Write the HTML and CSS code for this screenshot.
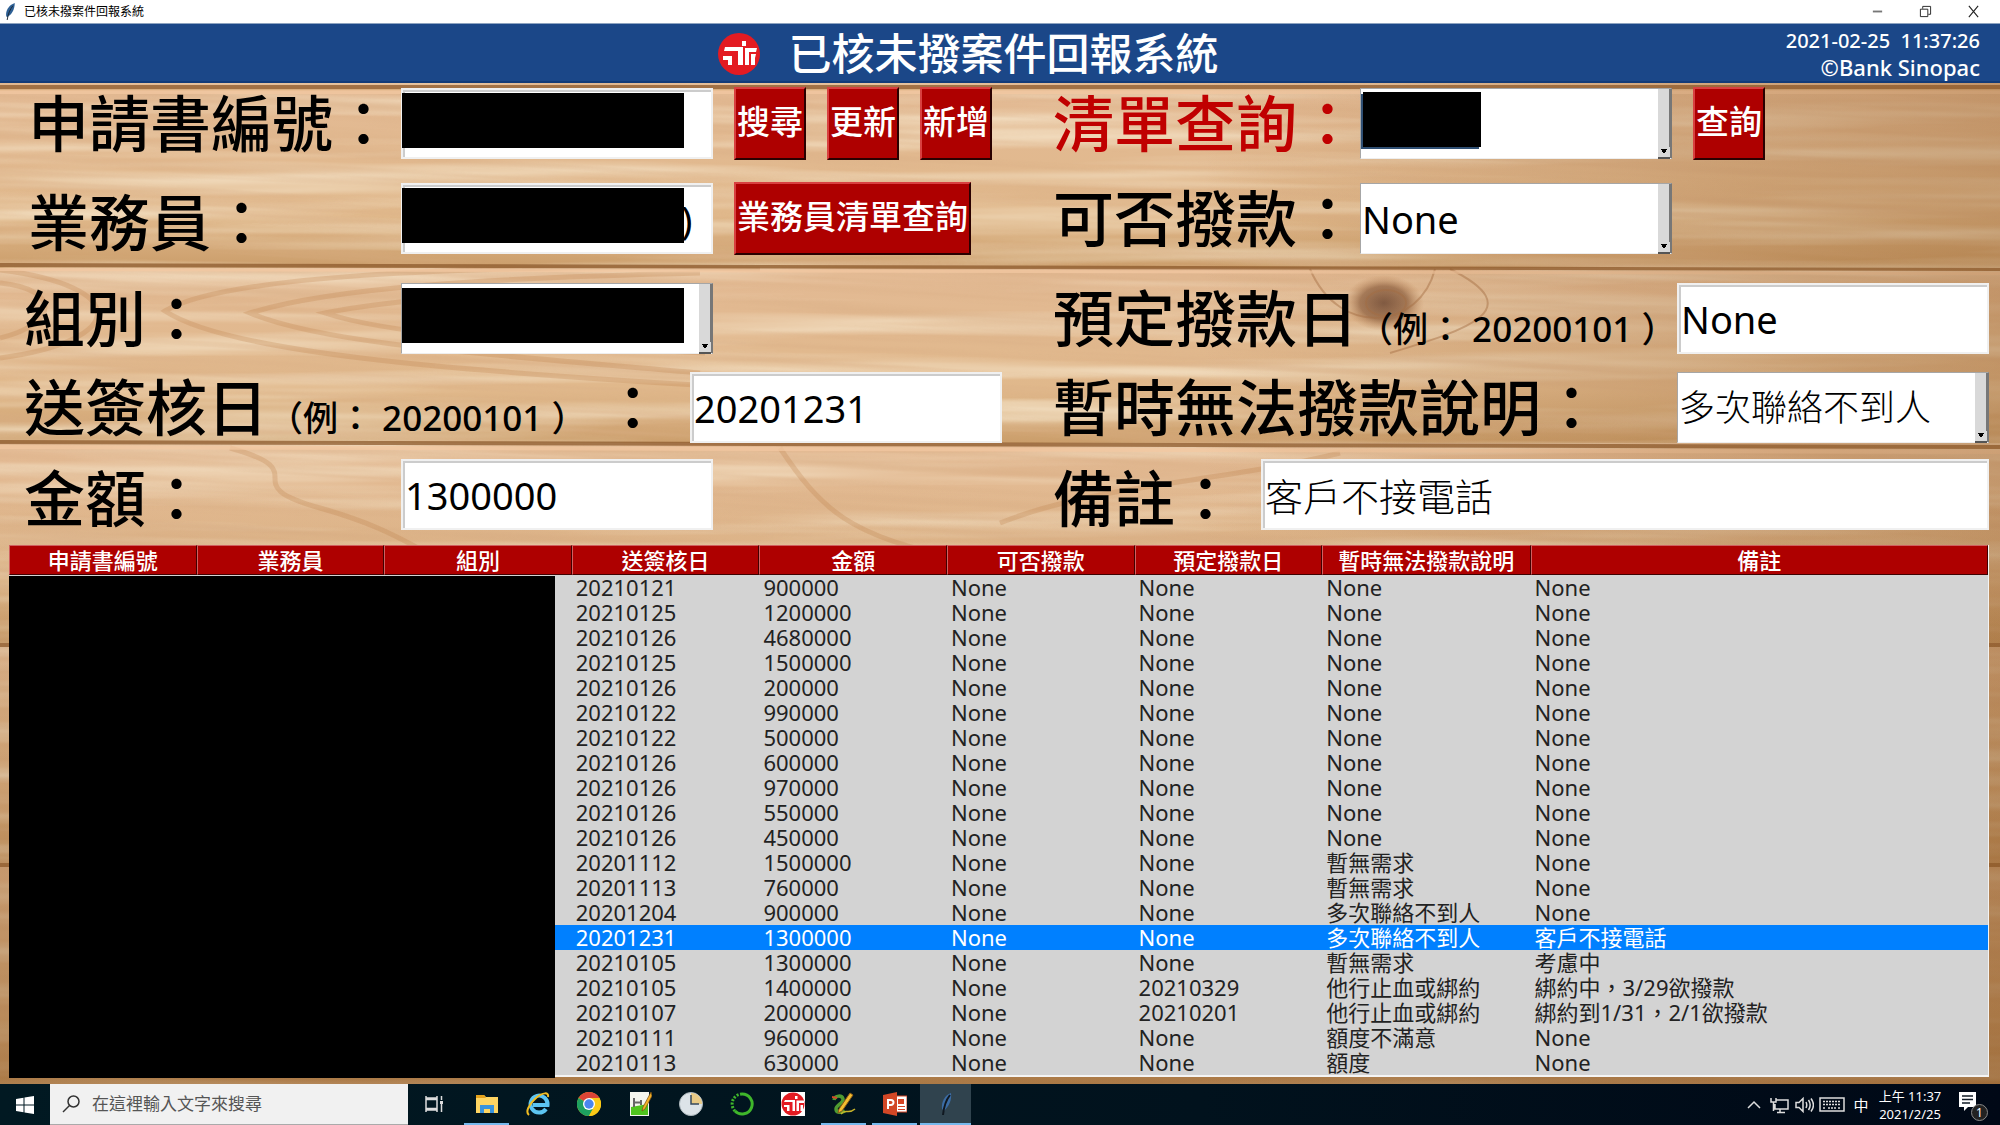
FILE: index.html
```html
<!DOCTYPE html>
<html lang="zh-Hant">
<head>
<meta charset="utf-8">
<title>已核未撥案件回報系統</title>
<link rel="stylesheet" href="styles.css">
</head>
<body>
<div class="titlebar">
  <svg class="feather" viewBox="0 0 12 18" aria-hidden="true"><path d="M11 0C5 2 1 8 2 14l1 1C8 12 11 7 11 0z" fill="#2d5f94"/><path d="M9 3C6 7 4 11 3 18" stroke="#1c2733" fill="none"/></svg>
  <span class="titlebar-text">已核未撥案件回報系統</span>
  <div class="window-buttons">
    <button aria-label="最小化"><svg viewBox="0 0 14 14"><path d="M2 7h10" stroke="#777" stroke-width="2"/></svg></button>
    <button aria-label="還原"><svg viewBox="0 0 14 14" fill="none" stroke="#222"><path d="M1.500 4.500h8v8h-8zM4 4V1.500h8.500V10H10"/></svg></button>
    <button aria-label="關閉"><svg viewBox="0 0 14 14" stroke="#222" stroke-width="1.200"><path d="M2 1l10 12M12 1L2 13"/></svg></button>
  </div>
</div>

<header class="banner">
  <div class="brand">
    <svg class="brand-logo" viewBox="0 0 42 42" aria-hidden="true"><circle cx="21" cy="21" r="21" fill="#e31b22"/><path fill="#fff" d="M7 14h18v18h-5V18H6zM5 23h9v9h-4v-5H5zM24 8h4v5h-4zM27 15h12l-1 4h-7v13h-4zM33 21h5l-1 4v7h-4z"/></svg>
    <h1>已核未撥案件回報系統</h1>
  </div>
  <div class="stamp"><time>2021-02-25&nbsp; 11:37:26</time><span class="owner">©Bank Sinopac</span></div>
</header>

<main class="desk">
  <svg class="wood" viewBox="0 0 2000 1001" preserveAspectRatio="none" aria-hidden="true">
    <defs>
      <filter id="grain" x="0" y="0" width="100%" height="100%"><feTurbulence type="fractalNoise" baseFrequency="0.0022 0.085" numOctaves="3" seed="8"/><feColorMatrix values="0 0 0 0 .70  0 0 0 0 .43  0 0 0 0 .24  2.200 0 0 0 -0.900"/></filter>
      <filter id="light" x="0" y="0" width="100%" height="100%"><feTurbulence type="fractalNoise" baseFrequency="0.0016 0.050" numOctaves="3" seed="31"/><feColorMatrix values="0 0 0 0 .92  0 0 0 0 .79  0 0 0 0 .60  0 1.800 0 0 -0.750"/></filter>
      <linearGradient id="plank" x2="0" y2="1"><stop offset="0" stop-color="#e3ba94"/><stop offset=".7" stop-color="#e0b88b"/><stop offset="1" stop-color="#cb9e6b"/></linearGradient>
      <linearGradient id="edge"><stop offset=".6" stop-color="#8a5420" stop-opacity="0"/><stop offset="1" stop-color="#8a5420" stop-opacity=".35"/></linearGradient>
      <linearGradient id="deep" x2="0" y2="1"><stop offset=".4" stop-color="#8a5420" stop-opacity="0"/><stop offset="1" stop-color="#8a5420" stop-opacity=".5"/></linearGradient>
      <radialGradient id="knot"><stop offset="0" stop-color="#7f5a44"/><stop offset=".6" stop-color="#9c7050" stop-opacity=".85"/><stop offset="1" stop-color="#c79468" stop-opacity="0"/></radialGradient>
    </defs>
    <path fill="url(#plank)" d="M0 0h2000v8H0z"/><path fill="url(#plank)" d="M0 8h2000v177H0z"/><path fill="url(#plank)" d="M0 185h2000v175H0z"/><path fill="url(#plank)" d="M0 360h2000v200H0z"/><path fill="url(#plank)" d="M0 560h2000v220H0z"/><path fill="url(#plank)" d="M0 780h2000v221H0z"/>
    <path filter="url(#light)" d="M0 0h2000v1001H0z"/>
    <g transform="rotate(3)"><path filter="url(#grain)" opacity=".6" d="M-60-120h2180v1200H-60z"/></g>
    <g fill="none" stroke="#bd804b" stroke-width="5" opacity=".28"><path d="M700 190C480 195 330 205 250 230c70 30 220 40 450 60M650 205C500 210 400 215 325 230c60 20 180 30 380 40M760 186C440 180 220 195 165 228c60 40 260 60 640 80M0 200c60 6 60 40 0 55M0 187c130 16 130 70 0 88M230 365c90 25 0 35 90 60s100 50 150 60M780 365c40 60 70 90 180 110M1000 440c100-40 220-40 340-70"/></g>
    <ellipse cx="1384" cy="220" rx="40" ry="28" fill="url(#knot)"/>
    <g fill="none" stroke="#a66f45" stroke-width="2" opacity=".45"><ellipse cx="1386" cy="220" rx="20" ry="13"/><path d="M1310 186c30 70 110 60 125 0M1450 186c80 40 20 60-60 84"/></g>
    <g fill="#8c5a2c" opacity=".75"><path d="M0 2h2000v4H0zM0 180l2000 5v3L0 184zM0 357l2000 5v4L0 361zM0 560h2000v4H0zM0 780h2000v4H0z"/></g>
    <g fill="#f3c9a2" opacity=".7"><path d="M0 7h2000v4H0zM0 185l2000 4v3L0 188zM0 362l2000 5v4L0 366z"/></g>
    <path fill="url(#edge)" d="M0 0h2000v1001H0z"/><path fill="url(#deep)" d="M0 0h2000v1001H0z"/>
  </svg>

  <form class="form" onsubmit="return false">
    <div class="cell cell-inset">
      <label for="app-no">申請書編號：</label>
      <div class="controls"><div class="field"><input id="app-no" type="text"><span class="mask"></span></div>
      <button class="action">搜尋</button><button class="action">更新</button><button class="action">新增</button></div>
    </div>
    <div class="cell cell-right">
      <label class="accent" for="list-query">清單查詢：</label>
      <div class="controls"><div class="field combo"><select id="list-query"><option></option></select><span class="mask mask-short"></span></div>
      <button class="action">查詢</button></div>
    </div>

    <div class="cell cell-inset low">
      <label for="agent">業務員：</label>
      <div class="controls"><div class="field"><input id="agent" class="tail" type="text" value=")"><span class="mask"></span></div>
      <button class="action">業務員清單查詢</button></div>
    </div>
    <div class="cell cell-right">
      <label for="can-pay">可否撥款：</label>
      <div class="field combo"><select id="can-pay"><option>None</option></select></div>
    </div>

    <div class="cell">
      <label for="team">組別：</label>
      <div class="field combo"><select id="team"><option></option></select><span class="mask"></span></div>
    </div>
    <div class="cell cell-end">
      <label for="pay-date">預定撥款日<small>（例： 20200101 ）</small></label>
      <div class="field"><input id="pay-date" type="text" value="None"></div>
    </div>

    <div class="cell cell-wide">
      <label for="sign-date">送簽核日<small>（例： 20200101 ）</small> ：</label>
      <div class="field"><input id="sign-date" type="text" value="20201231"></div>
    </div>
    <div class="cell cell-end">
      <label for="reason">暫時無法撥款說明：</label>
      <div class="field combo"><select id="reason" class="han"><option>多次聯絡不到人</option></select></div>
    </div>

    <div class="cell low">
      <label for="amount">金額：</label>
      <div class="field"><input id="amount" type="text" value="1300000"></div>
    </div>
    <div class="cell cell-note low">
      <label for="note">備註：</label>
      <div class="field field-fill"><input id="note" class="han-light" type="text" value="客戶不接電話"></div>
    </div>
  </form>

  <div class="list">
    <table>
      <colgroup><col class="c"><col class="c"><col class="c"><col class="c"><col class="c"><col class="c"><col class="c"><col class="c-reason"><col></colgroup>
      <thead><tr><th>申請書編號</th><th>業務員</th><th>組別</th><th>送簽核日</th><th>金額</th><th>可否撥款</th><th>預定撥款日</th><th>暫時無法撥款說明</th><th>備註</th></tr></thead>
      <tbody>
        <tr><td></td><td></td><td></td><td>20210121</td><td>900000</td><td>None</td><td>None</td><td>None</td><td>None</td></tr>
        <tr><td></td><td></td><td></td><td>20210125</td><td>1200000</td><td>None</td><td>None</td><td>None</td><td>None</td></tr>
        <tr><td></td><td></td><td></td><td>20210126</td><td>4680000</td><td>None</td><td>None</td><td>None</td><td>None</td></tr>
        <tr><td></td><td></td><td></td><td>20210125</td><td>1500000</td><td>None</td><td>None</td><td>None</td><td>None</td></tr>
        <tr><td></td><td></td><td></td><td>20210126</td><td>200000</td><td>None</td><td>None</td><td>None</td><td>None</td></tr>
        <tr><td></td><td></td><td></td><td>20210122</td><td>990000</td><td>None</td><td>None</td><td>None</td><td>None</td></tr>
        <tr><td></td><td></td><td></td><td>20210122</td><td>500000</td><td>None</td><td>None</td><td>None</td><td>None</td></tr>
        <tr><td></td><td></td><td></td><td>20210126</td><td>600000</td><td>None</td><td>None</td><td>None</td><td>None</td></tr>
        <tr><td></td><td></td><td></td><td>20210126</td><td>970000</td><td>None</td><td>None</td><td>None</td><td>None</td></tr>
        <tr><td></td><td></td><td></td><td>20210126</td><td>550000</td><td>None</td><td>None</td><td>None</td><td>None</td></tr>
        <tr><td></td><td></td><td></td><td>20210126</td><td>450000</td><td>None</td><td>None</td><td>None</td><td>None</td></tr>
        <tr><td></td><td></td><td></td><td>20201112</td><td>1500000</td><td>None</td><td>None</td><td>暫無需求</td><td>None</td></tr>
        <tr><td></td><td></td><td></td><td>20201113</td><td>760000</td><td>None</td><td>None</td><td>暫無需求</td><td>None</td></tr>
        <tr><td></td><td></td><td></td><td>20201204</td><td>900000</td><td>None</td><td>None</td><td>多次聯絡不到人</td><td>None</td></tr>
        <tr class="selected"><td></td><td></td><td></td><td>20201231</td><td>1300000</td><td>None</td><td>None</td><td>多次聯絡不到人</td><td>客戶不接電話</td></tr>
        <tr><td></td><td></td><td></td><td>20210105</td><td>1300000</td><td>None</td><td>None</td><td>暫無需求</td><td>考慮中</td></tr>
        <tr><td></td><td></td><td></td><td>20210105</td><td>1400000</td><td>None</td><td>20210329</td><td>他行止血或綁約</td><td>綁約中，3/29欲撥款</td></tr>
        <tr><td></td><td></td><td></td><td>20210107</td><td>2000000</td><td>None</td><td>20210201</td><td>他行止血或綁約</td><td>綁約到1/31，2/1欲撥款</td></tr>
        <tr><td></td><td></td><td></td><td>20210111</td><td>960000</td><td>None</td><td>None</td><td>額度不滿意</td><td>None</td></tr>
        <tr><td></td><td></td><td></td><td>20210113</td><td>630000</td><td>None</td><td>None</td><td>額度</td><td>None</td></tr>
      </tbody>
    </table>
    <div class="list-mask"></div>
  </div>
</main>

<footer class="taskbar">
  <button class="start" aria-label="開始"><svg viewBox="0 0 18 18" fill="#fff"><path d="M0 3l7.500-1.200V8.500H0zM8.500 1.600L18 0v8.500H8.500zM0 9.500h7.500v6.700L0 15zM8.500 9.500H18V18l-9.500-1.600z"/></svg></button>
  <label class="search"><svg viewBox="0 0 18 18" fill="none" stroke="#333" stroke-width="1.500"><circle cx="11.500" cy="6.500" r="5.500"/><path d="M7.500 10.500L1 17"/></svg><input type="text" placeholder="在這裡輸入文字來搜尋" aria-label="在這裡輸入文字來搜尋"></label>
  <button class="task task-view" aria-label="工作檢視"><svg viewBox="0 0 24 24" fill="none" stroke="#ddd" stroke-width="1.500"><path d="M4 7.500h11v9H4zM4 4v2h11V4M4 20v-2h11v2M19.500 4v4M19.500 12v8"/><path d="M18 9h3v3h-3z" fill="#ddd" stroke="none"/></svg></button>
  <button class="task running" aria-label="檔案總管"><svg viewBox="0 0 24 24"><path d="M1 3h8l2 2h12v16H1z" fill="#ffd562"/><path d="M1 3h8l2 3H1z" fill="#e5a21c"/><path d="M5 13h14v8h-4v-4H9v4H5z" fill="#3a93dc"/></svg></button>
  <button class="task" aria-label="Internet Explorer"><svg viewBox="0 0 24 24" fill="none"><path d="M20 17a8.500 8.500 0 1 1 1.500-4H7" stroke="#5cc5f2" stroke-width="4"/><path d="M3 23C-1 20 3 12 10 6s13-6 12-1" stroke="#f2bd22" stroke-width="2"/></svg></button>
  <button class="task" aria-label="Chrome"><svg viewBox="0 0 24 24"><circle cx="12" cy="12" r="12" fill="#fbc916"/><path d="M12 12L1.600 6A12 12 0 0 1 22.400 6z" fill="#dc4437"/><path d="M12 12L1.600 6A12 12 0 0 0 12 24l5-9z" fill="#1da05f"/><path d="M12 6h10.400L17 12z" fill="#dc4437"/><path d="M17 15l-5 9a12 12 0 0 0 10.400-18H12z" fill="#fbc916"/><circle cx="12" cy="12" r="6" fill="#fff"/><circle cx="12" cy="12" r="4.700" fill="#4a86ee"/></svg></button>
  <button class="task" aria-label="記事本"><svg viewBox="0 0 24 24"><path d="M2 0h19v24H2z" fill="#f3f5ee"/><path d="M3 15l17-3v11H3z" fill="#4fc41e"/><path d="M6 6v9M6 10.500h7M13 8v5" fill="none" stroke="#666" stroke-width="2"/><path d="M23 0L15 15l-1 4 3-2L24 4z" fill="#f3b028" stroke="#754d12" stroke-width=".7"/></svg></button>
  <button class="task" aria-label="時鐘"><svg viewBox="0 0 24 24"><circle cx="12" cy="12" r="11.500" fill="#dce3e8" stroke="#aeb8bd"/><path d="M12 12V1a11 11 0 0 1 11 11z" fill="#e8ca86"/><path d="M12 3v9h8" fill="none" stroke="#34495e" stroke-width="1.500"/></svg></button>
  <button class="task" aria-label="Anaconda"><svg viewBox="0 0 24 24" fill="none" stroke="#3fb62b"><path d="M12 2a10 10 0 1 1-7 17" stroke-width="3"/><path d="M5 19A10 10 0 0 1 12 2" stroke-width="3" stroke-dasharray="2 1.500"/></svg></button>
  <button class="task" aria-label="永豐"><svg viewBox="0 0 24 24"><path d="M0 0h24v24H0z" fill="#fff"/><circle cx="12" cy="12" r="11.500" fill="#e31b22"/><path fill="#fff" d="M4 8h10v11h-2.500v-9H3zM3 13h5.500v6H6v-4H3zM14 4h2.500v3H14zM15.500 8.500H23v2.500h-5v8h-2.500zM19.500 13H22v6h-2.500z"/></svg></button>
  <button class="task running" aria-label="Python IDE"><svg viewBox="0 0 24 24" fill="none"><path d="M2 8c1-5 8-5 9-1s-7 6-7 10 5 4 9 2" stroke="#4f9b31" stroke-width="3.500"/><path d="M18 1l3 2L10 19l-4 2 1-4z" fill="#f2bd30" stroke="#8f5b16"/><path d="M0 5l5 1" stroke="#d54829" stroke-width="2"/><path d="M9 22c4-6 7 1 14-5" stroke="#c9b42a" stroke-width="1.500"/></svg></button>
  <button class="task running" aria-label="PowerPoint"><svg viewBox="0 0 24 24"><path d="M12 4h12v16H12z" fill="#fff" stroke="#d44425"/><path d="M15 7h6v5h-6zM15 14h7v1h-7zM15 17h7v1h-7z" fill="#d44425"/><path d="M0 3l14-3v24L0 21z" fill="#d24726"/><path d="M5 17V8h3a2.500 2.500 0 0 1 0 5H5" fill="none" stroke="#fff" stroke-width="2"/></svg></button>
  <button class="task active" aria-label="已核未撥案件回報系統"><svg viewBox="0 0 24 24"><path d="M17 1C11 3 7 10 8 17l2 2c5-5 8-11 7-18z" fill="#3b6ca5"/><path d="M16 3c-4 5-6 10-7 20" fill="none" stroke="#101820" stroke-width="2"/></svg></button>
  <div class="tray">
    <svg class="tray-icon" viewBox="0 0 20 20"><path d="M4 13l6-6 6 6"/></svg>
    <svg class="tray-icon" viewBox="0 0 20 20"><path d="M7 5h12v9H6V9M11 14v3M8 17.500h8M2 3v4h5V3M4.500 7v9"/></svg>
    <svg class="tray-icon" viewBox="0 0 20 20"><path d="M2 7.500h3l4-4v13l-4-4H2zM12 7c1 2 1 4 0 6M14.500 5c2 3 2 7 0 10M17 3.500c3 4 3 9 0 13"/></svg>
    <svg class="tray-keyboard" viewBox="0 0 26 16"><path d="M1 1h24v13H1z"/><path d="M4 4.500h18M4 7.500h18M4 11h3M9 11h8M19 11h3" stroke-dasharray="2 1"/></svg>
    <span class="ime">中</span>
    <div class="clock"><span>上午 11:37</span><span>2021/2/25</span></div>
    <button class="notice" aria-label="通知"><svg viewBox="0 0 28 28"><path d="M1 1h17v15h-8l-4 4v-4H1z" fill="#fff"/><path d="M4 5h11M4 8.500h11M4 12h8" stroke="#111b26" stroke-width="1.300"/></svg><span class="badge">1</span></button>
  </div>
</footer>
</body>
</html>
```
FILE: styles.css
```css
* { box-sizing: border-box; }

body {
  margin: 0;
  min-height: 100vh;
  display: flex;
  flex-direction: column;
  background: #01151f;
  color: #000;
  font-family: "Noto Sans", "Noto Sans CJK TC", sans-serif;
}

button, input, select { font: inherit; margin: 0; border: 0; border-radius: 0; }

/* Window title bar */
.titlebar {
  height: 24px;
  display: flex;
  align-items: center;
  padding-left: 4px;
  background: #fff;
  border-bottom: 1px solid #8da3c0;
}
.feather { width: 12px; height: 17px; }
.titlebar-text { margin-left: 8px; font-size: 12px; line-height: 20px; }
.window-buttons { margin-left: auto; display: flex; padding-right: 3px; }
.window-buttons button { width: 48px; height: 22px; padding: 0; background: none; display: grid; place-items: center; }
.window-buttons svg { width: 13px; height: 13px; }

/* Banner */
.banner {
  height: 59px;
  display: grid;
  grid-template-columns: 1fr auto minmax(0, 1fr);
  align-items: center;
  padding-top: 3px;
  background: #1b4788;
  border-bottom: 2px solid #123b78;
  color: #fff;
}
.brand { grid-column: 2; display: flex; align-items: center; gap: 29px; margin-right: 64px; }
.brand-logo { width: 42px; height: 42px; }
h1 { margin: 0; font-size: 43px; line-height: 54px; font-weight: 500; }
.stamp { display: flex; flex-direction: column; align-items: flex-end; padding-right: 20px; font-size: 20px; line-height: 26px; font-weight: 500; }
.owner { font-size: 22px; }

/* Wooden desk */
.desk { position: relative; flex: 1; padding-bottom: 7px; background: #dfb687; }
.wood { position: absolute; inset: 0; width: 100%; height: 100%; }

.form {
  position: relative;
  display: grid;
  grid-template-columns: 1053fr 947fr;
  grid-template-rows: 95px 100px 89px 87px 86px;
  align-items: start;
  padding-top: 5px;
}
.cell { display: grid; grid-template: 71px / 377px auto; align-items: center; padding-left: 24px; justify-content: start; }
.cell-inset { padding-left: 28px; grid-template-columns: 373px auto; }
.cell-wide { grid-template-columns: 666px auto; }
.cell-right { padding-left: 0; grid-template-columns: 307px auto; }
.cell-end { padding: 0 11px 0 0; grid-template-columns: 1fr auto; justify-content: stretch; }
.cell-note { padding: 0 11px 0 0; grid-template-columns: 208px 1fr; justify-content: stretch; }
.cell > label { font-size: 61px; line-height: 63px; font-weight: 500; white-space: nowrap; }
.low > label { padding-top: 8px; }
.accent { color: #c00000; }
.cell small { font-size: 35px; line-height: 35px; }

.controls { display: flex; align-items: center; gap: 21px; }
.field { position: relative; width: 312px; height: 71px; }
.field-fill { width: auto; }
.field input, .field select { display: block; width: 100%; height: 100%; background: #fff; color: #000; font-size: 38px; font-weight: 400; outline: 0; }
.field input { padding: 0 2px; border: 2px solid #f0f0f0; box-shadow: inset 2px 2px #ccc; }
.field .tail { padding-left: 278px; }
.combo select {
  appearance: none;
  padding: 0 16px 0 1px;
  border: 1px solid;
  border-color: #a6a6a6 #777 #eee #a6a6a6;
  background: linear-gradient(to left, #777 2px, #d9d9d9 2px 13px, #fff 13px);
}
.field .han { font-size: 36px; font-weight: 300; }
.field .han-light { font-weight: 300; }
.combo::after {
  content: "";
  position: absolute;
  right: 2px;
  bottom: 0;
  width: 12px;
  height: 10px;
  border-bottom: 2px solid #555;
  background: conic-gradient(from -35deg at 50% 80%, #000 70deg, #d9d9d9 70deg) center / 8px 6px no-repeat #d9d9d9;
}
.mask { position: absolute; left: 1px; top: 5px; width: 282px; height: 55px; background: #000; }
.mask-short { left: 3px; top: 4px; width: 118px; box-shadow: -2px 2px #2f4f73; }

.action {
  height: 73px;
  padding: 0 1px 3px;
  border: 2px solid;
  border-color: #d84040 #2a0000 #2a0000 #d84040;
  background: #ae0000;
  color: #fff;
  font-size: 33px;
  line-height: 40px;
  font-weight: 500;
}

/* Case list */
.list { position: relative; margin: 0 11px 0 9px; border-right: 1px solid #f4f4f4; border-bottom: 2px solid #f4f4f4; background: #d3d3d3; }
table { width: 100%; border-collapse: separate; border-spacing: 0; table-layout: fixed; }
.c { width: 9.480%; }
.c-reason { width: 10.530%; }
th {
  height: 30px;
  padding: 0;
  border: 1px solid;
  border-color: #d06060 #400000 #400000 #d06060;
  background: #ae0000;
  color: #fff;
  font-size: 22px;
  line-height: 26px;
  font-weight: 500;
  white-space: nowrap;
}
td { height: 25px; padding: 0 4px; font-size: 22px; line-height: 25px; font-weight: 400; color: #222; white-space: nowrap; }
td:nth-child(8), td:nth-child(9) { font-family: "Noto Sans", "Noto Sans CJK TC", sans-serif; }
.selected td { background: #0080ff; color: #fff; }
.list-mask { position: absolute; left: 0; top: 31px; bottom: -3px; width: 27.600%; background: #000; }

/* Taskbar */
.taskbar { height: 41px; display: flex; align-items: stretch; background: linear-gradient(to right, #011922, #01121d 60%, #000816); color: #fff; }
.taskbar button { background: none; padding: 0; display: grid; place-items: center; color: #fff; }
.taskbar .start { width: 50px; }
.start svg { width: 18px; height: 18px; }
.search { width: 358px; display: flex; align-items: center; gap: 12px; padding: 0 12px; background: #f1f1f1; border-bottom: 1px solid #aaa; }
.search svg { width: 18px; height: 18px; }
.search input { flex: 1; min-width: 0; padding: 0; background: none; font-size: 17px; line-height: 24px; outline: 0; }
.search input::placeholder { color: #555; opacity: 1; }
.taskbar .task { width: 51px; border-bottom: 2px solid transparent; }
.taskbar .task-view { margin-right: 2px; }
.task svg { width: 24px; height: 24px; }
.taskbar .running { border-image: linear-gradient(to right, transparent 5px, #76b9ed 5px 46px, transparent 46px) 2; }
.taskbar .active { background: #30434e; border-bottom-color: #76b9ed; }
.tray { margin-left: auto; display: flex; align-items: center; gap: 5px; padding-right: 12px; }
.tray svg { fill: none; stroke: #ddd; stroke-width: 1.500; }
.tray-icon { width: 20px; height: 20px; }
.tray-keyboard { width: 26px; height: 16px; }
.ime { width: 22px; text-align: center; font-size: 15px; line-height: 20px; }
.clock { display: flex; flex-direction: column; align-items: center; width: 66px; margin-right: 8px; font-size: 13px; line-height: 18px; white-space: nowrap; }
.taskbar .notice { position: relative; width: 32px; height: 32px; }
.notice svg { width: 28px; height: 28px; stroke: none; }
.badge { position: absolute; right: 0; bottom: 0; width: 17px; height: 17px; border: 1px solid #888; border-radius: 50%; background: #222; font-size: 12px; line-height: 15px; text-align: center; }
```
